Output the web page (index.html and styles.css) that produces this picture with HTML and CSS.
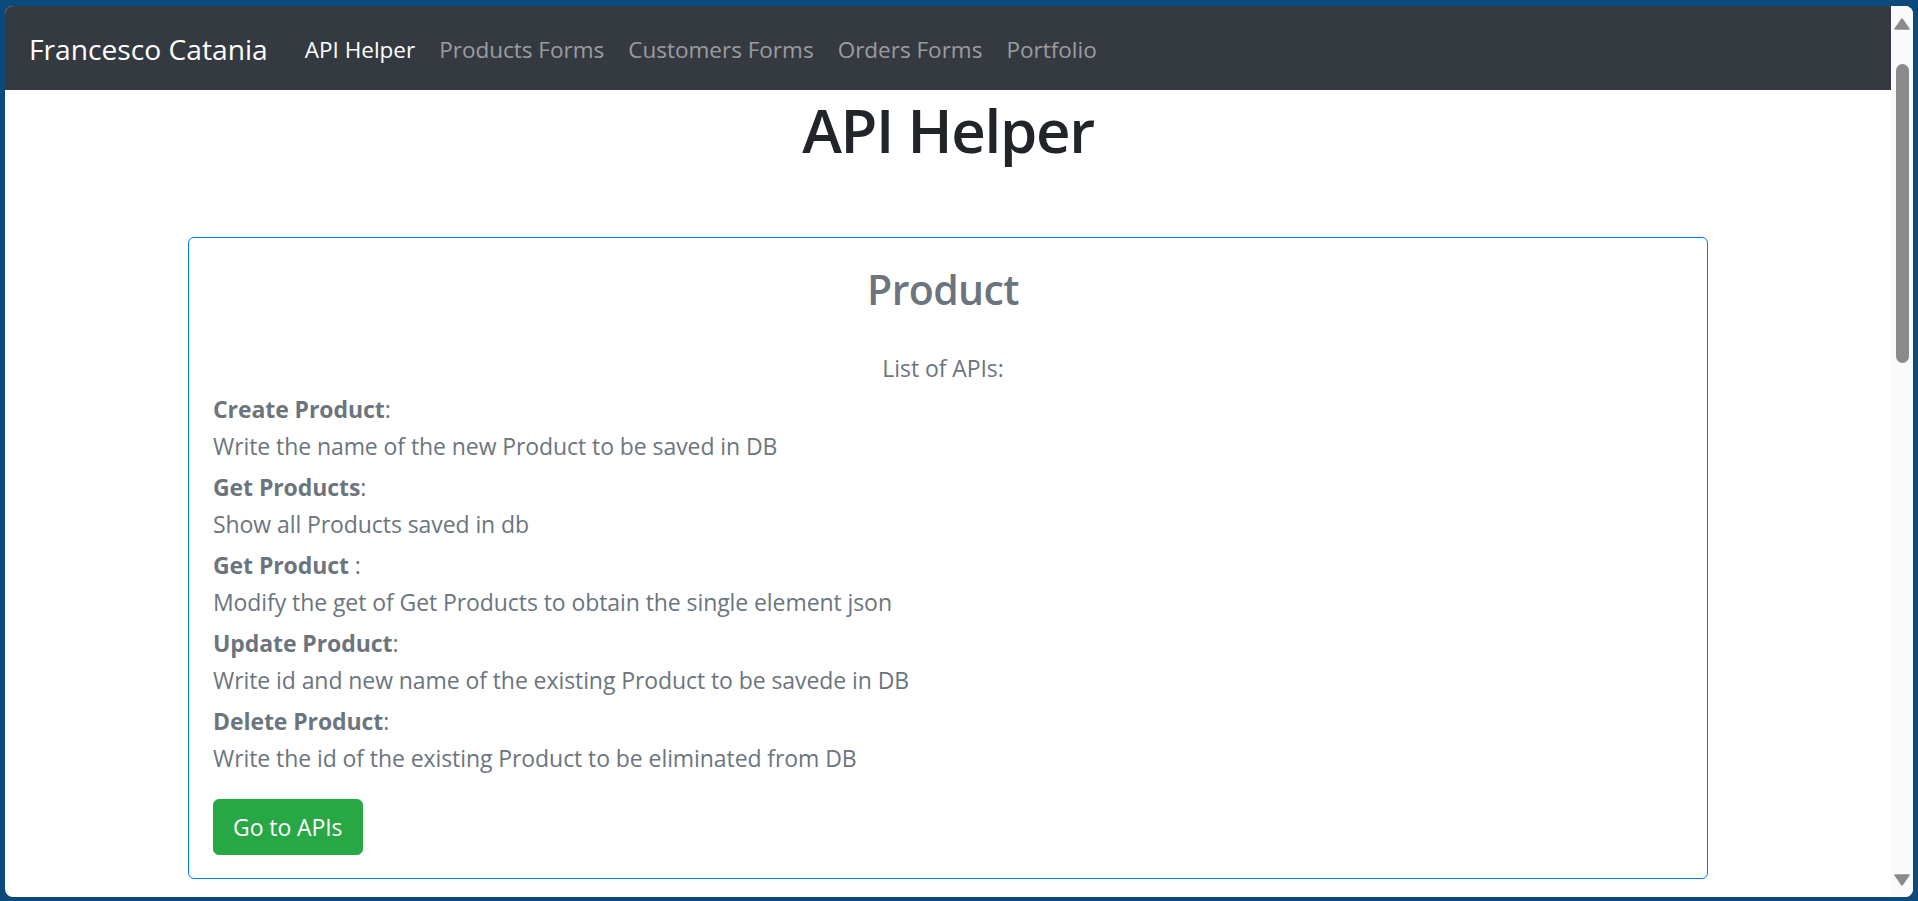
FILE: index.html
```html
<!DOCTYPE html>
<html lang="en">
<head>
<meta charset="utf-8">
<title>API Helper</title>
<link rel="stylesheet" href="styles.css">
</head>
<body>
<div class="window">
  <div class="viewport">
    <nav class="navbar">
      <a class="brand" href="#">Francesco Catania</a>
      <ul class="nav">
        <li><a class="nav-link active" href="#">API Helper</a></li>
        <li><a class="nav-link" href="#">Products Forms</a></li>
        <li><a class="nav-link" href="#">Customers Forms</a></li>
        <li><a class="nav-link" href="#">Orders Forms</a></li>
        <li><a class="nav-link" href="#">Portfolio</a></li>
      </ul>
    </nav>
    <main class="content">
      <h1 class="page-title">API Helper</h1>
      <section class="card">
        <h2 class="card-title">Product</h2>
        <p class="intro">List of APIs:</p>
        <div class="api">
          <div class="api-name"><strong>Create Product</strong>:</div>
          <div class="api-desc">Write the name of the new Product to be saved in DB</div>
        </div>
        <div class="api">
          <div class="api-name"><strong>Get Products</strong>:</div>
          <div class="api-desc">Show all Products saved in db</div>
        </div>
        <div class="api">
          <div class="api-name"><strong>Get Product</strong> :</div>
          <div class="api-desc">Modify the get of Get Products to obtain the single element json</div>
        </div>
        <div class="api">
          <div class="api-name"><strong>Update Product</strong>:</div>
          <div class="api-desc">Write id and new name of the existing Product to be savede in DB</div>
        </div>
        <div class="api">
          <div class="api-name"><strong>Delete Product</strong>:</div>
          <div class="api-desc">Write the id of the existing Product to be eliminated from DB</div>
        </div>
        <a class="btn" href="#">Go to APIs</a>
      </section>
    </main>
  </div>
  <div class="scrollbar">
    <svg class="arrow" width="16" height="12" viewBox="0 0 16 12"><path d="M8 1 L15 11 L1 11 Z" fill="#8b8b8b" stroke="#8b8b8b" stroke-width="1.5" stroke-linejoin="round"/></svg>
    <div class="track"><div class="thumb"></div></div>
    <svg class="arrow" width="16" height="12" viewBox="0 0 16 12"><path d="M1 1 L15 1 L8 11 Z" fill="#8b8b8b" stroke="#8b8b8b" stroke-width="1.5" stroke-linejoin="round"/></svg>
  </div>
</div>
</body>
</html>
```
FILE: styles.css
```css
* { box-sizing: border-box; }
html, body { height: 100%; }
body {
  margin: 0;
  padding: 6px 5px 4px 5px;
  background: #0b4a7b;
  font-family: "Open Sans", "Noto Sans", sans-serif;
  overflow: hidden;
}
.window {
  display: flex;
  height: 100%;
  background: #fff;
  border-radius: 8px;
  overflow: hidden;
}
.viewport {
  flex: 1;
  min-width: 0;
}
.navbar {
  display: flex;
  align-items: center;
  height: 84px;
  padding: 3px 24px 0;
  background: #343a40;
}
.brand {
  font-size: 28.2px;
  color: #fff;
  text-decoration: none;
  margin-right: 25px;
  line-height: 45px;
}
.nav {
  display: flex;
  list-style: none;
  margin: 0;
  padding: 0;
}
.nav-link {
  display: block;
  padding: 0 12px;
  font-size: 22.5px;
  line-height: 36px;
  color: rgba(255,255,255,.5);
  text-decoration: none;
}
.nav-link.active { color: #fff; }
.content {
  padding: 0;
}
.page-title {
  margin: 4px 0 71px;
  text-align: center;
  font-size: 60px;
  line-height: 72px;
  font-weight: 600;
  letter-spacing: -1.3px;
  color: #212529;
}
.card {
  width: 1520px;
  margin: 0 auto;
  border: 1px solid #007bff;
  border-radius: 6px;
  padding: 25px 34px 23px 24px;
  color: #6c757d;
  font-size: 23px;
  letter-spacing: -0.08px;
}
.card-title {
  margin: 0 0 34px;
  text-align: center;
  font-size: 41px;
  line-height: 53px;
  font-weight: 600;
  letter-spacing: -0.6px;
  color: #6c757d;
}
.intro {
  margin: 0 0 4px;
  text-align: center;
  line-height: 37px;
}
.api-name { line-height: 37px; }
.api-name strong { font-weight: 700; }
.api-desc { line-height: 37px; margin-bottom: 4px; }
.btn {
  display: inline-block;
  margin-top: 18px;
  height: 56px;
  padding: 0 19px;
  line-height: 54px;
  border: 1px solid #28a745;
  border-radius: 6px;
  background: #28a745;
  color: #fff;
  font-size: 23px;
  text-decoration: none;
}
.scrollbar {
  width: 22px;
  background: #fafafa;
  display: flex;
  flex-direction: column;
  align-items: center;
  padding: 12px 0 11px;
}
.arrow { display: block; flex: none; }
.track {
  flex: 1;
  width: 100%;
  padding: 34px 0 0;
  display: flex;
  justify-content: center;
}
.thumb {
  width: 13px;
  height: 299px;
  border-radius: 7px;
  background: #8b8b8b;
}
```
